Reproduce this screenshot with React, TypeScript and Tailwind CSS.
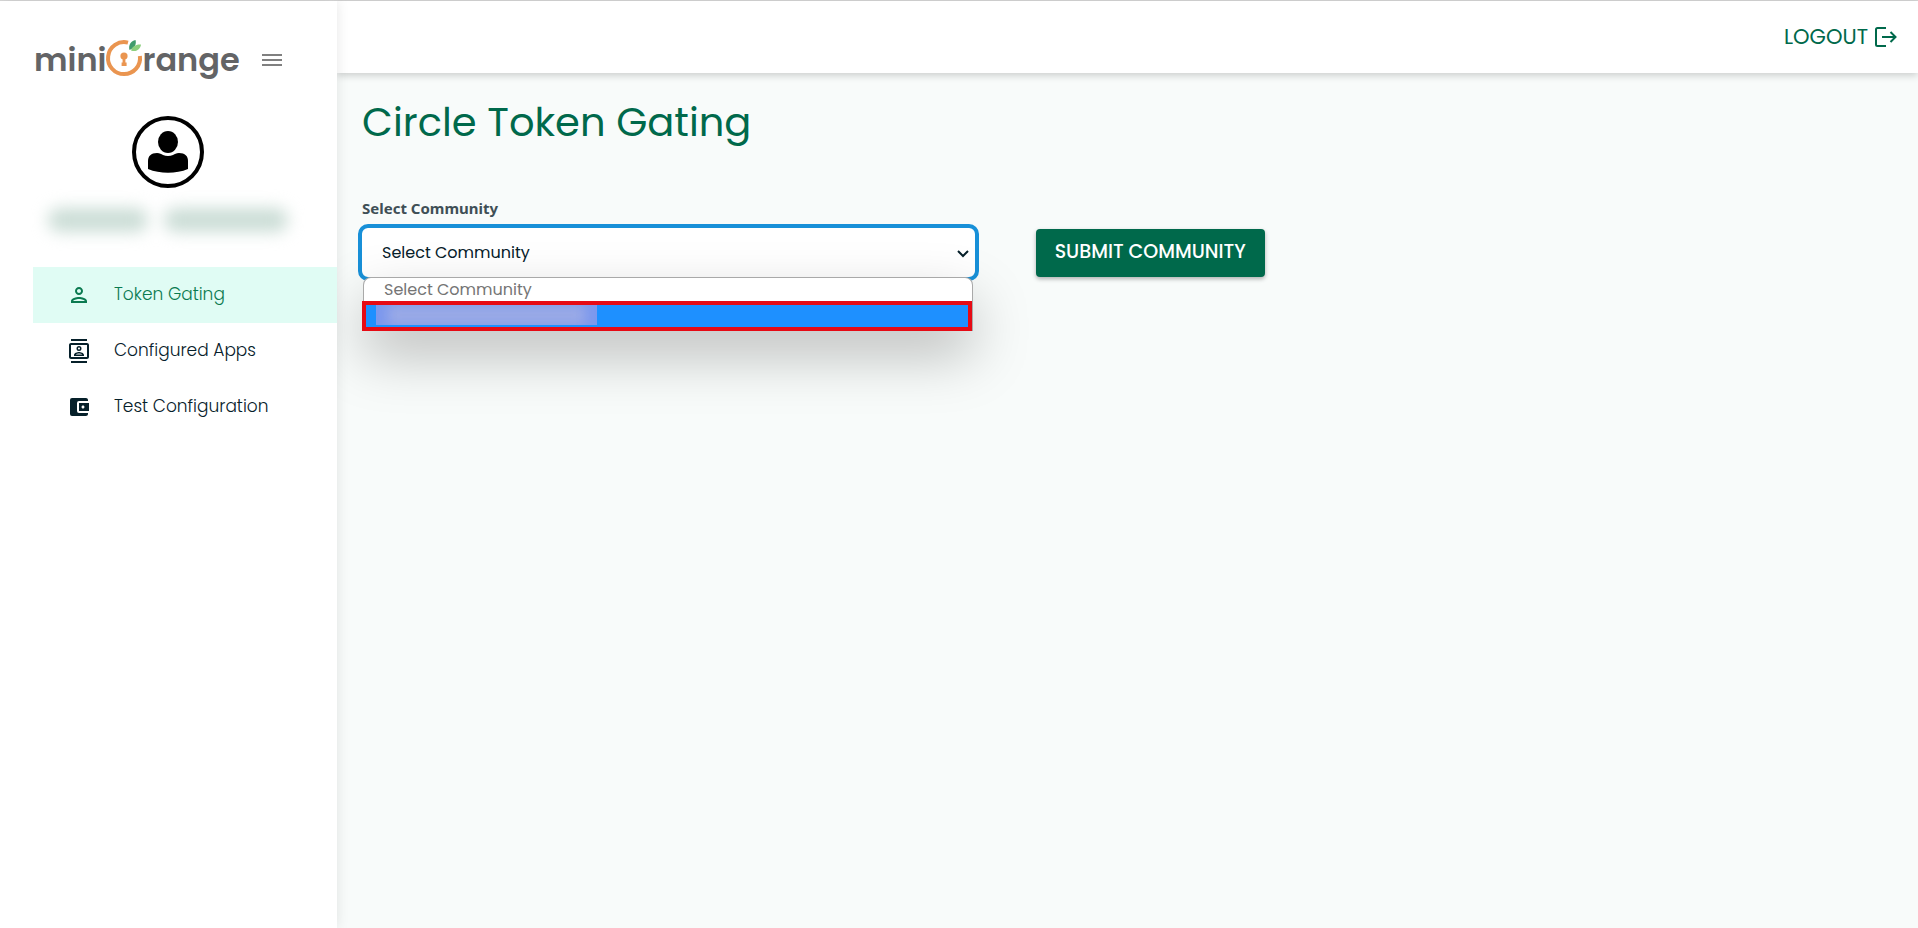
import React from 'react';
import { MdAccountBalanceWallet, MdOutlineContacts, MdOutlinePerson } from 'react-icons/md';

const menuItems = [
  { label: 'Token Gating', icon: MdOutlinePerson, active: true },
  { label: 'Configured Apps', icon: MdOutlineContacts, active: false },
  { label: 'Test Configuration', icon: MdAccountBalanceWallet, active: false },
];

const Logo: React.FC = () => (
  <div className="flex items-center text-[#636466] font-semibold text-[32px] leading-[44px]">
    <span>mini</span>
    <svg viewBox="0 0 38 44" className="w-[38px] h-11 -mx-px shrink-0" fill="none" aria-hidden="true">
      <path d="M23 4.6A16 16 0 1 0 34.900 18" stroke="#ea9550" strokeWidth="4" />
      <circle cx="19" cy="18" r="3.6" fill="#ea9550" />
      <path d="M17.6 19h2.8v5.500h1.2V28h-5v-3.500h1z" fill="#ea9550" />
      <path d="M24.500 12C23 7 26 3 30.500 2c1 3 0 8-6 10z" fill="#3f9b6c" />
      <path d="M26 12.500c1-4 5-6.500 10-6-.5 4-4 8-10 6z" fill="#8ccf7e" />
    </svg>
    <span>range</span>
  </div>
);

const Avatar: React.FC = () => (
  <svg viewBox="0 0 72 72" className="w-[72px] h-[72px]" role="img" aria-label="Profile">
    <circle cx="36" cy="36" r="34" fill="#fff" stroke="#000" strokeWidth="4" />
    <ellipse cx="36" cy="26" rx="10" ry="11" />
    <path d="M16 45c0-5 3-8 9-8 3 0 4 1 6 2 3 1.300 7 1.300 10 0 2-1 3-2 6-2 6 0 9 3 9 8v8c-12 5-28 5-40 0z" />
  </svg>
);

const Sidebar: React.FC = () => (
  <aside className="relative z-20 w-[337px] shrink-0 bg-white pt-[37px] shadow-[0_0_12px_rgba(0,0,0,0.1)]">
    <div className="flex items-center justify-between pl-[34px] pr-[55px]">
      <Logo />
      <button type="button" aria-label="Toggle menu" className="text-[#808080]">
        <svg viewBox="0 0 20 14" className="w-5 h-[14px]" stroke="currentColor" strokeWidth="2">
          <path d="M0 2h20M0 7h20M0 12h20" />
        </svg>
      </button>
    </div>

    <div className="mt-[34px] pr-0.5 flex flex-col items-center">
      <Avatar />
      <div className="mt-5 flex h-6 gap-4 blur-[8px]">
        <div className="w-[100px] rounded-full bg-[#cbddd6]" />
        <div className="w-[124px] rounded-full bg-[#cbddd6]" />
      </div>
    </div>

    <nav className="mt-[35px] pl-[33px]">
      {menuItems.map(({ label, icon: Icon, active }) => (
        <a
          key={label}
          href="#"
          className={`flex h-14 items-center gap-[23px] pl-[34px] text-[17px] font-light ${active ? 'bg-[#e0fcf4] text-[#0b7a50]' : 'text-[#06202a]'}`}
        >
          <Icon className="h-6 w-6" />
          {label}
        </a>
      ))}
    </nav>
  </aside>
);

const Header: React.FC = () => (
  <header className="relative z-10 flex h-[72px] items-center justify-end bg-white pr-[21px] shadow-[0_2px_8px_rgba(0,0,0,0.2)]">
    <button type="button" className="flex items-center gap-[7px] text-[21px] text-[#00694b]">
      LOGOUT
      <svg viewBox="0 0 22 20" className="h-5 w-[22px]" fill="none" stroke="currentColor" strokeWidth="2">
        <path d="M11 1H2.500Q1 1 1 2.500v15Q1 19 2.500 19H11" />
        <path d="M7 10h13.500M15.500 5l5 5-5 5" />
      </svg>
    </button>
  </header>
);

const CommunitySelect: React.FC = () => (
  <div className="relative mt-2.5">
    <select
      id="community"
      defaultValue=""
      className="block h-[49px] w-full appearance-none rounded-md bg-white pl-5 text-base text-[#06202a] outline-4 outline-[#1890d8]"
    >
      <option value="">Select Community</option>
    </select>
    <svg viewBox="0 0 12 8" className="pointer-events-none absolute right-1.5 top-[22px] h-2 w-3" fill="none" stroke="#06202a" strokeWidth="2">
      <path d="M1 1l5 5 5-5" />
    </svg>

    <ul
      role="listbox"
      aria-label="Communities"
      className="absolute left-px right-0.5 top-[49px] rounded-t-lg border border-b-0 border-[#a9a9a9] bg-white shadow-[0_24px_56px_rgba(0,0,0,0.25)]"
    >
      <li role="option" aria-selected="false" className="h-[23px] pl-5 text-base leading-6 text-[#757575]">
        Select Community
      </li>
      <li role="option" aria-selected="true" className="-ml-0.5 h-[30px] border-4 border-[#e60a14] bg-[#1e90ff] pl-[10px]">
        <div className="h-5 w-[221px] overflow-hidden bg-[#7c98ee]">
          <div className="mx-3 h-5 bg-[#9aaae6] blur-[6px]" />
        </div>
      </li>
    </ul>
  </div>
);

export default function App() {
  return (
    <div className="flex min-h-screen border-t border-[#d8d8d8] bg-[#f8fbfa] font-['Poppins',sans-serif]">
      <Sidebar />
      <div className="min-w-0 flex-1">
        <Header />
        <main className="px-[25px] pt-[23px]">
          <h1 className="text-[40px] leading-[52px] text-[#00694b]">Circle Token Gating</h1>
          <div className="mt-[50px] flex items-end">
            <div className="w-[44%] pr-[61px]">
              <label htmlFor="community" className="block text-[15px] leading-5 font-bold text-[#3f4f56] font-['Noto_Sans',sans-serif]">
                Select Community
              </label>
              <CommunitySelect />
            </div>
            <button
              type="button"
              className="h-12 rounded bg-[#00694b] px-[19px] pb-0.5 text-[19px] font-medium text-white shadow-[0_2px_4px_rgba(0,0,0,0.3)]"
            >
              SUBMIT COMMUNITY
            </button>
          </div>
        </main>
      </div>
    </div>
  );
}
